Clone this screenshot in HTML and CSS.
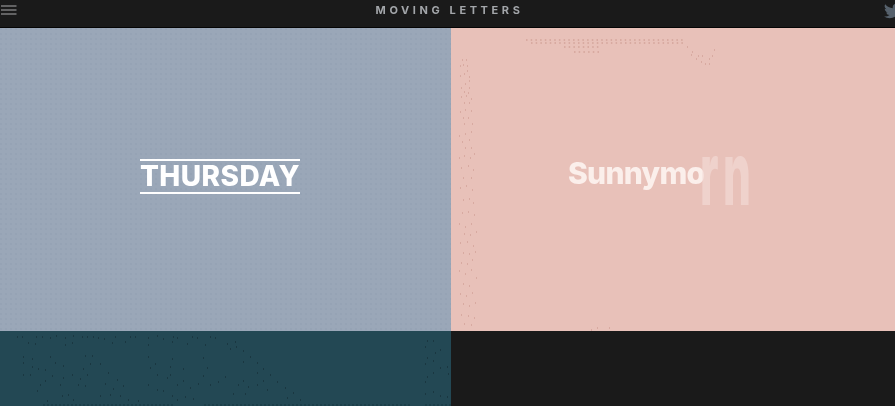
FILE: index.html
```html
<!DOCTYPE html>
<html lang="en">
<head>
<meta charset="utf-8">
<title>Moving Letters</title>
<link rel="stylesheet" href="styles.css">
</head>
<body>
<header class="topbar">
  <button class="menu" aria-label="Menu">
    <svg width="16" height="10" viewBox="0 0 16 10"><path d="M0 1h15.500M0 5h15.500M0 9h15.500" stroke="#a9a9ab" stroke-width="1.200" fill="none"/></svg>
  </button>
  <h1 class="brand">MOVING LETTERS</h1>
  <svg class="bird" width="18" height="16" viewBox="0 0 24 20"><path fill="#56616c" d="M24 2.400a9.800 9.800 0 0 1-2.800.8A4.900 4.900 0 0 0 23.300.5a9.800 9.800 0 0 1-3.100 1.200 4.900 4.900 0 0 0-8.400 4.500A14 14 0 0 1 1.700.9a4.900 4.900 0 0 0 1.500 6.600 4.900 4.900 0 0 1-2.200-.6c0 2.400 1.700 4.400 4 4.900a4.900 4.900 0 0 1-2.200.1 4.900 4.900 0 0 0 4.600 3.400A9.900 9.900 0 0 1 0 17.300 14 14 0 0 0 7.500 19.500c9.100 0 14-7.500 14-14v-.6A10 10 0 0 0 24 2.400z"/></svg>
</header>
<main class="grid">
  <section class="cell slate">
    <div class="dots-slate"></div>
    <p class="thursday">THURSDAY</p>
  </section>
  <section class="cell blush">
    <svg class="scatter" width="444" height="303" viewBox="0 0 444 303">
      <path class="pink-dash" d="M75 12H234M80 15H234M113 19H149M123 24H149"/>
      <path class="pink-dot" d="M236 19h1M241 24h1M240 27h1M247 28h1M251 28h1M245 31h1M250 34h1M254 36h1M258 31h1M261 28h1M263 22h1M258 36h1M11 32h1M15 32h1M9 38h1M12 37h1M16 38h1M9 48h1M13 46h1M18 49h1M16 43h1M18 53h1M14 56h1M10 60h1M18 60h1M13 64h1M17 65h1M10 69h1M15 68h1M20 71h1M13 75h1M18 75h1M9 84h1M14 82h1M20 83h1M12 90h1M17 90h1M13 96h1M21 96h1M8 108h1M14 106h1M20 104h1M11 114h1M18 112h1M14 120h1M20 120h1M8 130h1M13 128h1M19 130h1M23 126h1M10 140h1M17 138h1M22 142h1M12 150h1M20 150h1M9 160h1M15 158h1M21 162h1M12 172h1M18 171h1M22 175h1M11 185h1M17 184h1M23 187h1M8 196h1M14 199h1M20 196h1M25 204h1M13 206h1M19 207h1M9 215h1M16 214h1M22 218h1M12 225h1M18 226h1M24 224h1M10 235h1M16 236h1M21 232h1M8 243h1M14 246h1M20 242h1M25 250h1M12 256h1M18 258h1M9 266h1M15 268h1M21 265h1M12 276h1M18 278h1M24 275h1M10 287h1M17 288h1M23 290h1M13 296h1M20 297h1M140 302h1M146 300h1M158 300h1"/>
    </svg>
    <div class="sunny">
      <span class="sunny-word">Sunnymo</span>
      <span class="ghost ghost-r">r</span>
      <span class="ghost ghost-n">n</span>
    </div>
  </section>
  <section class="cell teal">
    <svg class="scatter" width="451" height="75" viewBox="0 0 451 75">
      <path class="teal-dot" d="M17 6h1M22 6h1M36 6h1M42 6h1M50 7h1M56 5h1M65 7h1M73 5h1M82 6h1M87 6h1M93 6h1M98 7h1M104 8h1M115 6h1M130 6h1M135 6h1M148 7h1M157 5h1M163 8h1M173 6h1M177 7h1M192 6h1M197 7h1M210 6h1M215 7h1M28 12h1M35 13h1M65 14h1M72 12h1M112 12h1M125 11h1M148 14h1M172 11h1M187 13h1M205 14h1M227 13h1M235 11h1M236 16h1M230 18h1M243 20h1M23 26h1M32 28h1M50 26h1M85 25h1M92 25h1M148 26h1M172 28h1M203 27h1M250 26h1M23 32h1M55 32h1M63 35h1M90 33h1M100 33h1M155 33h1M243 31h1M257 32h1M32 36h1M38 38h1M45 39h1M83 38h1M150 37h1M170 36h1M183 38h1M207 37h1M263 38h1M23 44h1M30 44h1M52 45h1M72 44h1M87 44h1M108 42h1M157 44h1M170 44h1M203 45h1M225 46h1M257 42h1M270 44h1M45 50h1M63 47h1M80 48h1M117 49h1M167 47h1M183 50h1M218 51h1M243 50h1M263 50h1M40 54h1M60 54h1M78 54h1M85 55h1M105 53h1M123 55h1M148 54h1M177 54h1M198 53h1M210 54h1M238 54h1M248 56h1M257 54h1M277 51h1M37 60h1M113 58h1M157 59h1M163 60h1M190 57h1M267 59h1M285 57h1M62 65h1M68 64h1M100 65h1M110 64h1M120 65h1M172 65h1M185 66h1M233 63h1M245 63h1M293 62h1M47 70h1M73 69h1M128 69h1M138 70h1M177 69h1M193 68h1M287 67h1M300 69h1M427 10h1M433 10h1M425 16h1M440 19h1M435 22h1M427 27h1M433 30h1M425 33h1M447 36h1M440 37h1M433 42h1M427 46h1M425 51h1M448 43h1M425 63h1M433 61h1M447 66h1M440 65h1"/>
      <path class="teal-dash" d="M43 74H174M204 74H410M425 74H451"/>
    </svg>
  </section>
  <section class="cell ink"></section>
</main>
</body>
</html>
```
FILE: styles.css
```css
* { box-sizing: border-box; }
html, body { margin: 0; height: 100%; overflow: hidden; background: #1a1a1a; }
body { display: flex; flex-direction: column; width: 895px; height: 406px; }

.topbar {
  position: relative;
  flex: 0 0 28px;
  display: flex;
  align-items: center;
  justify-content: center;
  background: #1a1a1a;
  border-bottom: 1px solid #050505;
}
.menu {
  position: absolute;
  left: 1px;
  top: 5px;
  padding: 0;
  border: 0;
  background: none;
  line-height: 0;
}
.brand {
  margin: -6px 0 0 4px;
  font: 700 11px/1 Inter, "Liberation Sans", sans-serif;
  letter-spacing: 3.600px;
  color: #a3a6aa;
  filter: blur(.25px);
}
.bird { position: absolute; right: -7px; top: 3px; }

.grid {
  flex: 1;
  display: grid;
  grid-template-columns: 451px 444px;
  grid-template-rows: 303px 75px;
}
.cell {
  position: relative;
  display: flex;
  align-items: center;
  justify-content: center;
  overflow: hidden;
}
.slate { background: #9aa7b8; }
.blush { background: #e8c1b9; }
.teal { background: #234854; }
.ink { background: #1a1a1a; }

.dots-slate {
  position: absolute;
  inset: 0;
  background-image: radial-gradient(circle at 1px 1px, #8f9db0 0.7px, transparent 1px);
  background-size: 5px 5px;
  opacity: .4;
}
.scatter { position: absolute; left: 0; top: 0; }
.pink-dash { fill: none; stroke: #d2a399; stroke-width: 1.400; stroke-dasharray: 1.500 3.200; }
.pink-dot { fill: none; stroke: #d2a399; stroke-width: 1.500; }
.teal-dot { fill: none; stroke: #12272f; stroke-width: 1; }
.teal-dash { fill: none; stroke: #173640; stroke-width: 1; stroke-dasharray: 2 2; }

.thursday {
  position: relative;
  margin: -6px 0 0 -11px;
  padding: 0;
  border-top: 2px solid #fff;
  border-bottom: 2px solid #fff;
  font: 800 28px/31px Inter, "Liberation Sans", sans-serif;
  letter-spacing: .450px;
  color: #fff;
  filter: blur(.25px);
}

.sunny {
  position: relative;
  width: 184px;
  height: 60px;
  margin: 0 0 0 -26px;
}
.sunny-word {
  position: absolute;
  left: 0;
  top: 5px;
  font: 800 30px/36px Inter, "Liberation Sans", sans-serif;
  letter-spacing: -0.700px;
  color: #fdf3f0;
  opacity: .92;
  filter: blur(.3px);
}
.ghost {
  position: absolute;
  font: 800 44px/40px Inter, "Liberation Sans", sans-serif;
  color: #f3dad5;
  opacity: .7;
  transform: scaleY(2);
}
.ghost-r { left: 132px; top: 3px; }
.ghost-n { left: 155px; top: 3px; }
```
